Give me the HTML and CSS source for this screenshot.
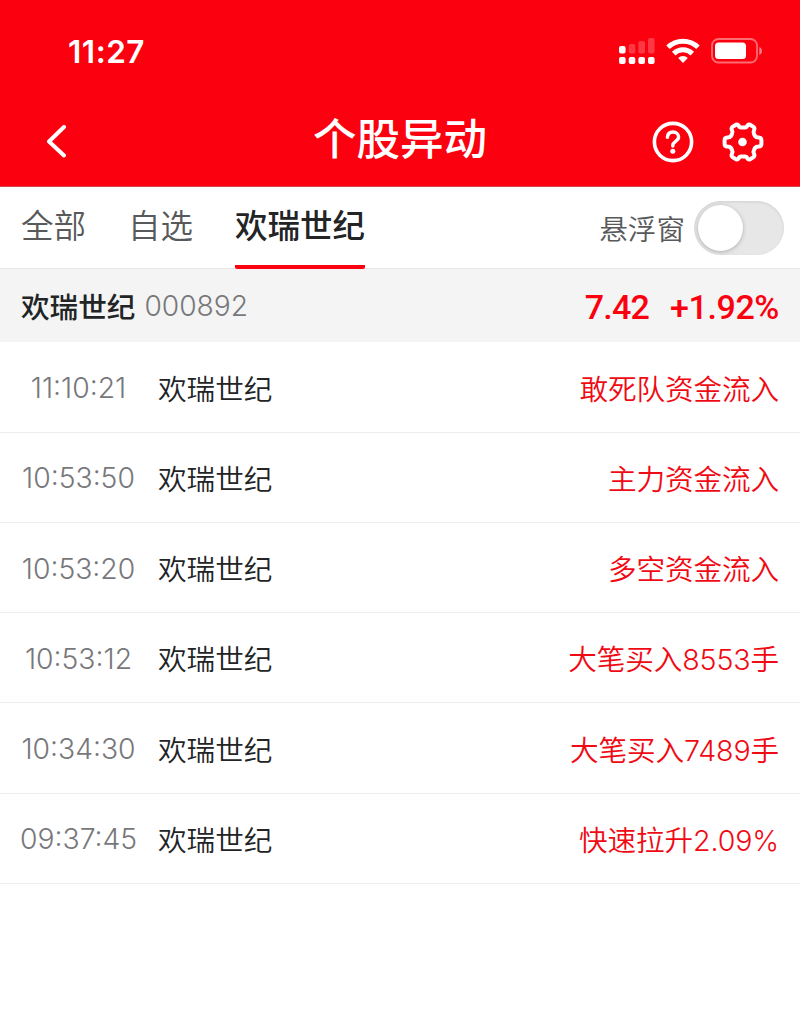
FILE: index.html
```
<!DOCTYPE html>
<html lang="zh-CN">
<head>
    <meta charset="UTF-8">
    <meta name="viewport" content="width=device-width, initial-scale=1.0">
    <title>个股异动</title>
    <link rel="stylesheet" href="styles.css">
</head>
<body>
    <div class="page">
        <header class="header">
            <div class="status-bar">
                <span class="clock">11:27</span>
                <div class="status-icons">
                    <svg class="signal" width="36" height="27" viewBox="0 0 36 27" fill="#fff">
                        <rect x="0" y="8" width="6.6" height="7.6" rx="2"/>
                        <g opacity="0.22">
                            <rect x="9.7" y="6" width="6.6" height="9.6" rx="2"/>
                            <rect x="19.4" y="3" width="6.6" height="12.6" rx="2"/>
                            <rect x="29" y="0" width="6.6" height="15.6" rx="2"/>
                        </g>
                        <rect x="0" y="19" width="6.6" height="7" rx="2"/>
                        <rect x="9.7" y="19" width="6.6" height="7" rx="2"/>
                        <rect x="19.4" y="19" width="6.6" height="7" rx="2"/>
                        <rect x="29" y="19" width="6.6" height="7" rx="2"/>
                    </svg>
                    <svg class="wifi" width="34" height="26" viewBox="0 0 34 26" fill="none" stroke="#fff" stroke-width="5">
                        <path d="M2 9.3a21.5 21.5 0 0 1 30 0"/>
                        <path d="M7.7 15.6a13.3 13.3 0 0 1 18.6 0"/>
                        <path d="M17 25l-4.8-5.1a7.2 7.2 0 0 1 9.6 0z" fill="#fff" stroke="none"/>
                    </svg>
                    <svg class="battery" width="52" height="26" viewBox="0 0 52 26">
                        <rect x="1" y="1" width="45" height="23.5" rx="6.5" fill="none" stroke="#fff" stroke-width="1.8" opacity="0.42"/>
                        <rect x="4" y="4.5" width="31" height="16.5" rx="3.5" fill="#fff"/>
                        <path d="M48.3 9v8c3.6-1.2 3.6-6.8 0-8z" fill="#fff" opacity="0.5"/>
                    </svg>
                </div>
            </div>
            <div class="nav-bar">
                <svg class="back" width="20" height="34" viewBox="0 0 20 34" fill="none" stroke="#fff" stroke-width="4" stroke-linecap="round" stroke-linejoin="round">
                    <path d="M18 2L3 16.500L18 30.500"/>
                </svg>
                <h1>个股异动</h1>
                <div class="nav-actions">
                    <svg width="42" height="42" viewBox="0 0 42 42" fill="none" stroke="#fff" stroke-width="3.6" stroke-linecap="round">
                        <circle cx="21" cy="21" r="18.6"/>
                        <path d="M15.400 16.400c.2-3.400 2.400-5.400 5.600-5.400s5.600 2.100 5.600 5c0 4.100-5.800 4.400-5.800 8.200v.8" stroke-width="3.400"/>
                        <circle cx="20.800" cy="30.300" r="2.500" fill="#fff" stroke="none"/>
                    </svg>
                    <svg width="42" height="42" viewBox="0 0 42 42" fill="none" stroke="#fff" stroke-width="4" stroke-linejoin="round">
                        <path d="M13.200 4.200Q15 2.600 16.600 4.600Q17.400 6.600 19 6.600H23Q24.600 6.600 25.400 4.600Q27 2.600 28.800 4.200L31.600 5.900Q33 7.200 32 9.400Q31 11.400 32 13L33 15Q34 16.400 36.600 16.400Q39.400 16.600 39.400 19V23Q39.400 25.400 36.600 25.600Q34 25.600 33 27L32 29Q31 30.600 32 32.600Q33 34.800 31.600 36.100L28.800 37.800Q27 39.400 25.400 37.400Q24.600 35.400 23 35.400H19Q17.400 35.400 16.600 37.400Q15 39.400 13.200 37.800L10.400 36.100Q9 34.800 10 32.600Q11 30.600 10 29L9 27Q8 25.600 5.400 25.600Q2.600 25.400 2.600 23V19Q2.600 16.600 5.400 16.400Q8 16.400 9 15L10 13Q11 11.400 10 9.400Q9 7.200 10.400 5.900Z"/>
                        <circle cx="20.500" cy="21" r="4.300" fill="#fff" stroke="none"/>
                    </svg>
                </div>
            </div>
        </header>

        <div class="tabs">
            <a class="tab">全部</a>
            <a class="tab">自选</a>
            <a class="tab active">欢瑞世纪</a>
            <div class="float-window">
                <span>悬浮窗</span>
                <div class="switch"></div>
            </div>
        </div>

        <div class="quote">
            <span class="stock-name">欢瑞世纪</span>
            <span class="stock-code">000892</span>
            <span class="price">7.42</span>
            <span class="change">+1.92%</span>
        </div>

        <ul class="list">
            <li><span class="time">11:10:21</span><span class="name">欢瑞世纪</span><span class="event">敢死队资金流入</span></li>
            <li><span class="time">10:53:50</span><span class="name">欢瑞世纪</span><span class="event">主力资金流入</span></li>
            <li><span class="time">10:53:20</span><span class="name">欢瑞世纪</span><span class="event">多空资金流入</span></li>
            <li><span class="time">10:53:12</span><span class="name">欢瑞世纪</span><span class="event">大笔买入8553手</span></li>
            <li><span class="time">10:34:30</span><span class="name">欢瑞世纪</span><span class="event">大笔买入7489手</span></li>
            <li><span class="time">09:37:45</span><span class="name">欢瑞世纪</span><span class="event">快速拉升2.09%</span></li>
        </ul>
    </div>
</body>
</html>
```
FILE: styles.css
```
* {
    box-sizing: border-box;
}

body {
    margin: 0;
    background-color: #fff;
    font-family: Inter, "Noto Sans CJK SC", sans-serif;
    font-size: 28.6px;
    font-weight: 350;
    color: #222426;
}

.page {
    width: 800px;
}

.header {
    height: 187px;
    background-color: #fb000f;
    border-bottom: 1px solid #d4474e;
    color: #fff;
}

.status-bar {
    display: flex;
    justify-content: space-between;
    align-items: center;
    height: 102px;
    padding: 0 37px 0 68px;
}

.clock {
    font-size: 31.5px;
    font-weight: 600;
    letter-spacing: 0.5px;
}

.status-icons {
    display: flex;
    align-items: center;
    gap: 11px;
}

.nav-bar {
    display: grid;
    grid-template-columns: 1fr auto 1fr;
    align-items: center;
    height: 80px;
    padding: 0 36px 0 46px;
}

h1 {
    margin: 0 10px 6px 0;
    font-size: 43.5px;
    font-weight: 500;
    line-height: 60px;
}

.nav-actions {
    display: flex;
    justify-content: flex-end;
    gap: 28px;
}

.tabs {
    display: flex;
    height: 82px;
    padding: 0 16px 0 21px;
    border-bottom: 1px solid #e8e8e8;
}

.tab {
    margin-right: 42px;
    font-size: 32.5px;
    line-height: 80px;
    color: #58595b;
}

.tab.active {
    height: 82px;
    border-bottom: 4px solid #fb000f;
    border-radius: 2px;
    font-weight: 500;
    color: #222426;
}

.float-window {
    display: flex;
    align-items: center;
    gap: 9px;
    margin-left: auto;
    color: #58595b;
}

.switch {
    width: 90px;
    height: 54px;
    padding: 4px;
    border-radius: 27px;
    background-color: #e7e7e7;
    box-shadow: inset 0 1px 3px rgba(0, 0, 0, 0.1);
}

.switch::before {
    content: "";
    display: block;
    width: 45px;
    height: 46px;
    border-radius: 50%;
    background-color: #fff;
    box-shadow: 0 1px 4px rgba(0, 0, 0, 0.25);
}

.quote {
    display: flex;
    align-items: center;
    height: 73px;
    padding: 0 22px 0 21px;
    background-color: #f4f4f4;
}

.stock-name {
    font-weight: 500;
}

.stock-code {
    margin-left: 9px;
    font-size: 28.2px;
    color: #77787b;
}

.price,
.change {
    padding-top: 2px;
    font-family: Roboto, sans-serif;
    font-size: 34px;
    font-weight: 500;
    color: #fb000f;
}

.price {
    margin-left: auto;
    letter-spacing: -0.8px;
}

.change {
    margin-left: 21px;
    margin-right: -1px;
    letter-spacing: -0.4px;
}

.list {
    margin: 0;
    padding: 0.4px 0 0;
    list-style: none;
}

.list li {
    display: flex;
    align-items: center;
    height: 90.25px;
    padding: 0 21px 0 20px;
    border-bottom: 1px solid #ececee;
}

.time {
    width: 117px;
    padding-top: 2px;
    text-align: center;
    font-size: 28.3px;
    color: #77787b;
}

.name {
    margin-left: 21px;
}

.event {
    margin-left: auto;
    letter-spacing: -0.1px;
    color: #f00a14;
}
```
